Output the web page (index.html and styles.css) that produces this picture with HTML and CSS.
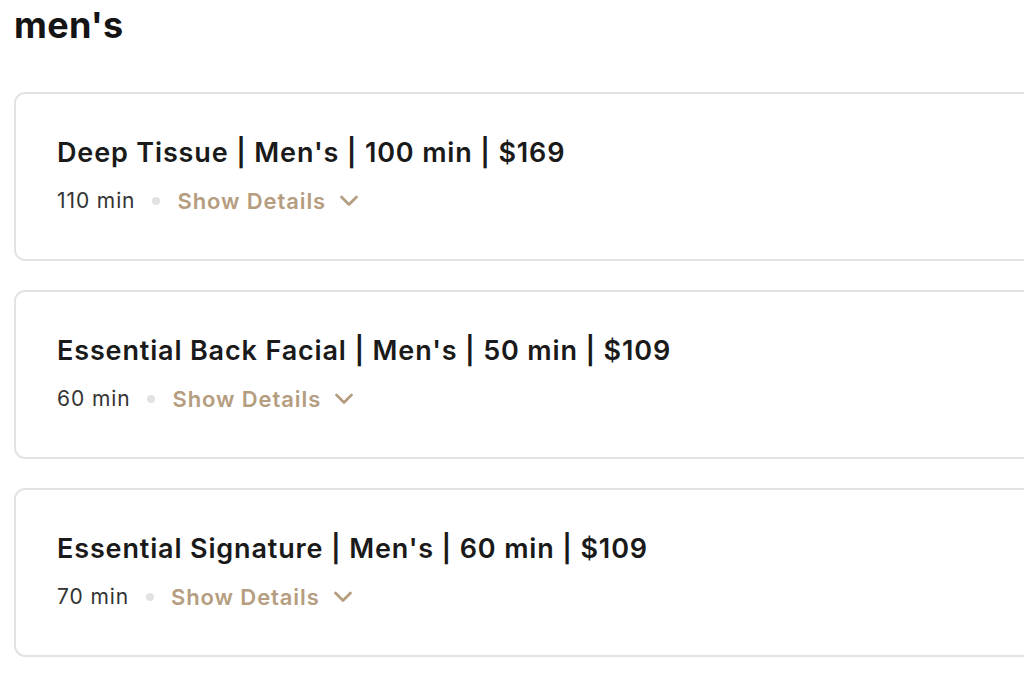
FILE: index.html
```html
<!DOCTYPE html>
<html>
<head>
<meta charset="utf-8">
<link rel="stylesheet" href="styles.css">
</head>
<body>
<main class="page">
  <h1 class="heading">men's</h1>
  <div class="list">
    <div class="card">
      <h2 class="title">Deep Tissue | Men's | 100 min | $169</h2>
      <div class="meta">
        <span class="dur">110 min</span>
        <span class="dot"></span>
        <span class="details">Show Details
          <svg class="chev" viewBox="0 0 20 12" width="20" height="12"><path d="M2.5 2 L10 9.5 L17.5 2" fill="none" stroke="currentColor" stroke-width="2.7" stroke-linecap="round" stroke-linejoin="round"/></svg>
        </span>
      </div>
    </div>
    <div class="card">
      <h2 class="title">Essential Back Facial | Men's | 50 min | $109</h2>
      <div class="meta">
        <span class="dur">60 min</span>
        <span class="dot"></span>
        <span class="details">Show Details
          <svg class="chev" viewBox="0 0 20 12" width="20" height="12"><path d="M2.5 2 L10 9.5 L17.5 2" fill="none" stroke="currentColor" stroke-width="2.7" stroke-linecap="round" stroke-linejoin="round"/></svg>
        </span>
      </div>
    </div>
    <div class="card">
      <h2 class="title">Essential Signature | Men's | 60 min | $109</h2>
      <div class="meta">
        <span class="dur">70 min</span>
        <span class="dot"></span>
        <span class="details">Show Details
          <svg class="chev" viewBox="0 0 20 12" width="20" height="12"><path d="M2.5 2 L10 9.5 L17.5 2" fill="none" stroke="currentColor" stroke-width="2.7" stroke-linecap="round" stroke-linejoin="round"/></svg>
        </span>
      </div>
    </div>
  </div>
</main>
</body>
</html>
```

FILE: styles.css
```css
html, body {
  margin: 0;
  padding: 0;
  background: #ffffff;
  overflow: hidden;
}
body {
  font-family: Inter, "Liberation Sans", sans-serif;
  color: #1a1a1a;
}
.page {
  width: 1100px;
  padding: 0 0 0 14px;
}
.heading {
  margin: 0;
  padding-top: 4px;
  font-size: 36px;
  font-weight: 700;
  line-height: 42px;
  letter-spacing: 0.3px;
  color: #141414;
}
.list {
  margin-top: 46px;
  display: flex;
  flex-direction: column;
  gap: 29px;
}
.card {
  box-sizing: border-box;
  height: 169px;
  border: 2px solid #e3e3e3;
  border-radius: 11px;
  padding: 39px 40px 0 41px;
}
.title {
  margin: 0;
  font-size: 27px;
  font-weight: 600;
  line-height: 40px;
  letter-spacing: 0.85px;
  color: #1a1a1a;
}
.meta {
  margin-top: 15px;
  display: flex;
  align-items: center;
  font-size: 21px;
  line-height: 26px;
}
.dur {
  color: #333333;
  letter-spacing: 0.9px;
}
.dot {
  width: 8px;
  height: 8px;
  border-radius: 50%;
  background: #e2e2e2;
  margin: 0 17px 0 17px;
}
.details {
  display: flex;
  align-items: center;
  gap: 13px;
  color: #b59d80;
  font-weight: 600;
  font-size: 22px;
  letter-spacing: 0.9px;
}
.chev {
  display: block;
}
```
